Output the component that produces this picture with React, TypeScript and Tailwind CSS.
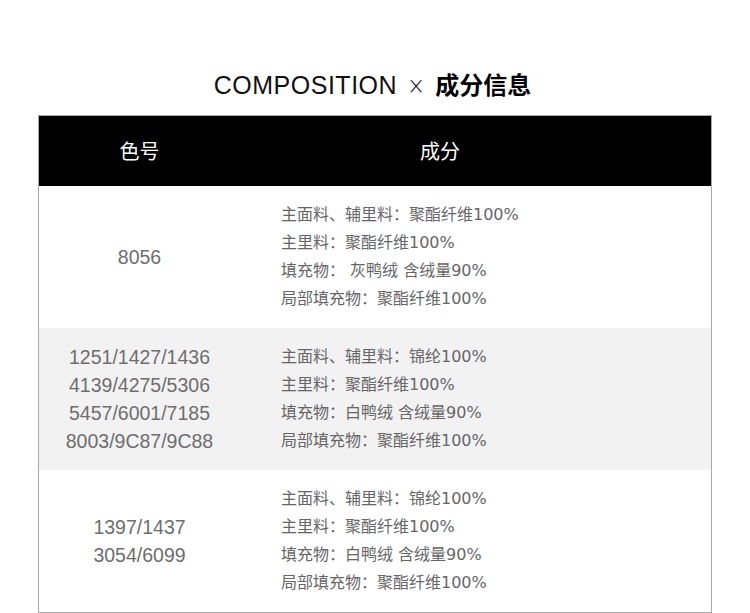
const rows = [
  {
    codes: ["8056"],
    lines: [
      "主面料、辅里料：聚酯纤维100%",
      "主里料：聚酯纤维100%",
      "填充物： 灰鸭绒 含绒量90%",
      "局部填充物：聚酯纤维100%",
    ],
    shaded: false,
  },
  {
    codes: ["1251/1427/1436", "4139/4275/5306", "5457/6001/7185", "8003/9C87/9C88"],
    lines: [
      "主面料、辅里料：锦纶100%",
      "主里料：聚酯纤维100%",
      "填充物：白鸭绒 含绒量90%",
      "局部填充物：聚酯纤维100%",
    ],
    shaded: true,
  },
  {
    codes: ["1397/1437", "3054/6099"],
    lines: [
      "主面料、辅里料：锦纶100%",
      "主里料：聚酯纤维100%",
      "填充物：白鸭绒 含绒量90%",
      "局部填充物：聚酯纤维100%",
    ],
    shaded: false,
  },
];

export default function App() {
  return (
    <div className="w-[750px] h-[613px] bg-white overflow-hidden font-['Liberation_Sans','Noto_Sans_CJK_SC',sans-serif]">
      <h1 className="h-[115px] pt-[65px] pr-[5px] flex justify-center items-baseline text-black leading-[38px]">
        <span className="text-[25px] font-light tracking-[0.5px] text-[#111]">COMPOSITION</span>
        <span className="text-[24px] font-light ml-[9px] mr-[9px] text-[#222] font-['DejaVu_Sans',sans-serif] scale-x-90">×</span>
        <span className="text-[24px] font-bold font-['Noto_Sans_CJK_SC',sans-serif]">成分信息</span>
      </h1>

      <div className="ml-[38px] w-[674px] border border-[#a9a9a9]">
        <div className="grid grid-cols-[201px_1fr] h-[70px] bg-black text-white text-[20px] font-['Noto_Sans_CJK_SC',sans-serif]">
          <div className="flex items-center justify-center">色号</div>
          <div className="flex items-center pl-[180px]">成分</div>
        </div>

        {rows.map((row, i) => (
          <div
            key={i}
            className={`grid grid-cols-[201px_1fr] h-[142px] ${row.shaded ? "bg-[#f2f2f2]" : "bg-white"}`}
          >
            <div className="flex flex-col items-center justify-center text-[19.5px] leading-[28px] text-[#6e6e6e]">
              {row.codes.map((c) => (
                <div key={c}>{c}</div>
              ))}
            </div>
            <div className="flex flex-col justify-center pl-[41px] text-[16px] leading-[28px] text-[#666] font-['DejaVu_Sans','Noto_Sans_CJK_SC',sans-serif]">
              {row.lines.map((l) => (
                <div key={l} className="whitespace-pre">{l}</div>
              ))}
            </div>
          </div>
        ))}
      </div>
    </div>
  );
}
